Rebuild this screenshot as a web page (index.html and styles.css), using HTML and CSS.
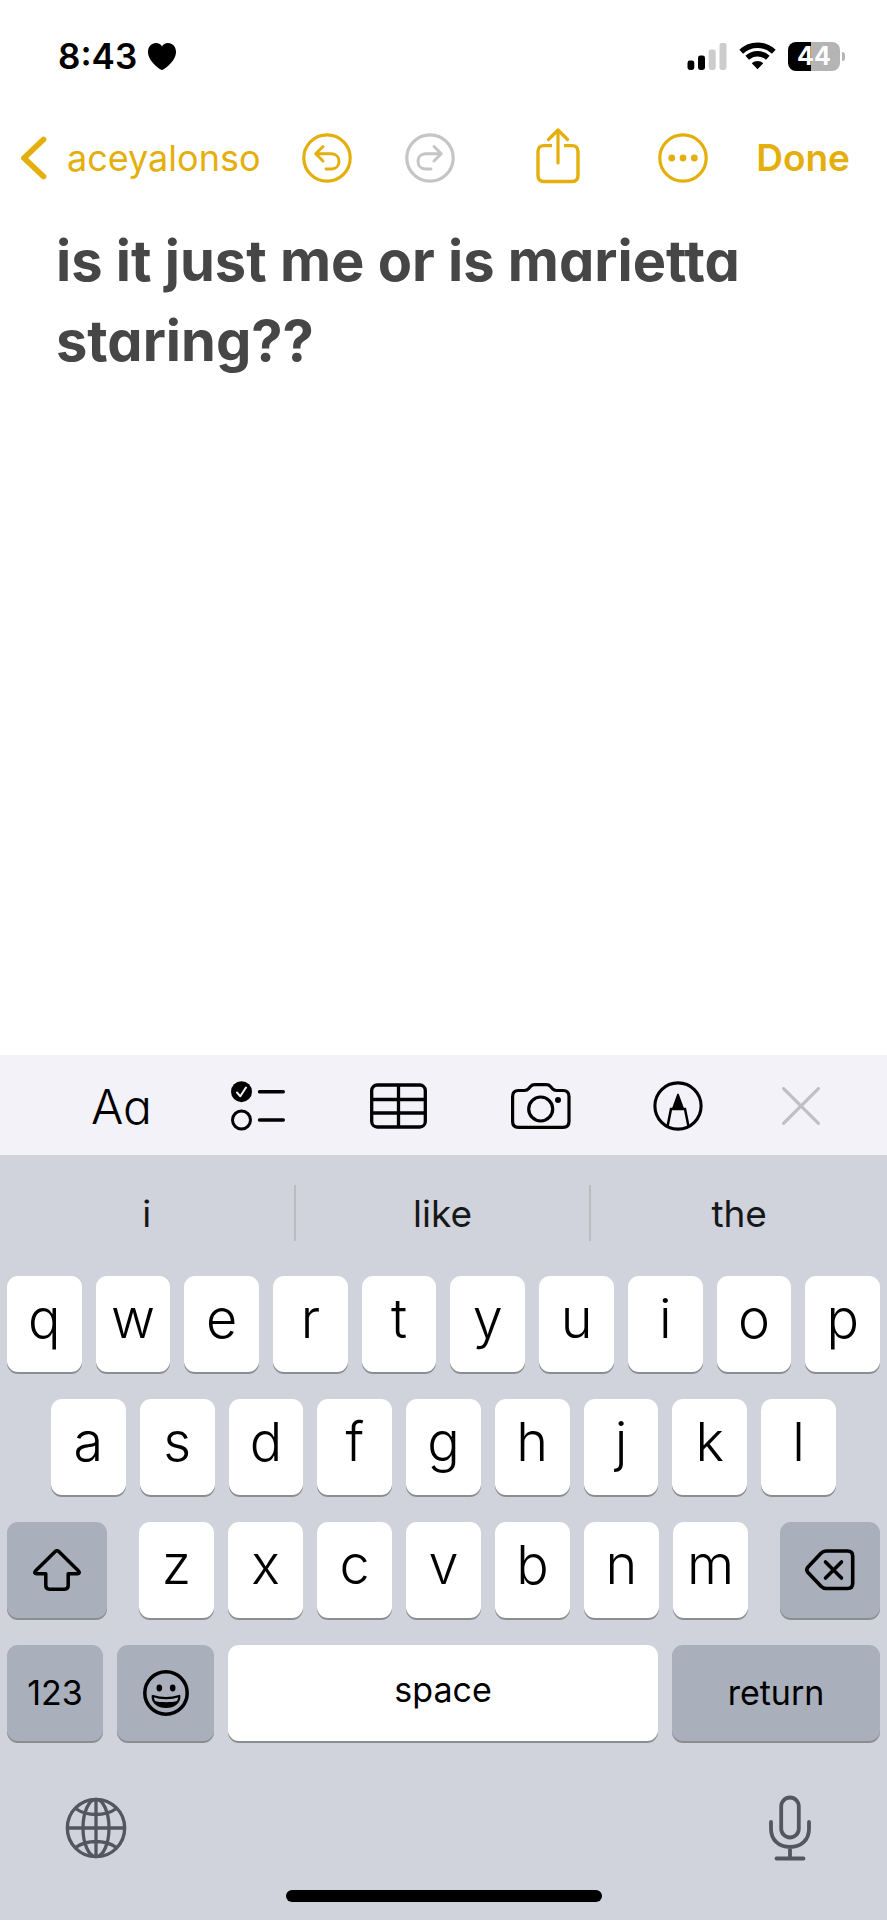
FILE: index.html
```html
<!DOCTYPE html>
<html lang="en">
<head>
<meta charset="utf-8">
<meta name="viewport" content="width=device-width, initial-scale=1">
<title>Notes</title>
<link rel="stylesheet" href="styles.css">
</head>
<body>
<div class="screen">
  <header class="status">
    <div class="status-left">
      <span class="time">8:43</span>
      <svg class="icon" width="28" height="27" viewBox="0 0 28 27" aria-hidden="true"><path fill="#000" d="M14 27C12.500 27 0 18.500 0 9C0 3.500 3.500 0 8 0C10.800 0 13 1.400 14 3.600C15 1.400 17.200 0 20 0C24.500 0 28 3.500 28 9C28 18.500 15.500 27 14 27Z"/></svg>
    </div>
    <div class="status-right">
      <svg class="icon" width="40" height="27" viewBox="0 0 40 27" aria-hidden="true"><g fill="#000"><rect x="0.500" y="17.500" width="6.800" height="9.500" rx="2.400"/><rect x="11" y="12.500" width="7" height="14.500" rx="2.400"/></g><g fill="#ccc"><rect x="21.700" y="6.500" width="7" height="20.500" rx="2.400"/><rect x="32.500" y="0" width="7" height="27" rx="2.400"/></g></svg>
      <svg class="icon" width="37" height="28" viewBox="0 0 37 28" aria-hidden="true"><path d="M2.200 9.800C11.400 1 25.600 1 34.800 9.800M8.200 15.800C14.200 10.300 22.800 10.300 28.800 15.800" fill="none" stroke="#000" stroke-width="5.400"/><path d="M12.800 21.200C16 18.400 21 18.400 24.200 21.200L18.500 27.200Z" fill="#000"/></svg>
      <div class="battery"><span class="battery-body">44</span><span class="battery-tip"></span></div>
    </div>
  </header>

  <nav class="nav">
    <button class="back" type="button">
      <svg class="icon" width="26" height="44" viewBox="0 0 26 44" aria-hidden="true"><path d="M22.500 3.500L3 22L22.500 40.500" fill="none" stroke="currentColor" stroke-width="5.800" stroke-linecap="round" stroke-linejoin="round"/></svg>
      aceyalonso
    </button>
    <button class="tool" type="button" aria-label="Undo">
      <svg class="icon" width="50" height="50" viewBox="0 0 50 50" fill="none" stroke="currentColor" stroke-linecap="round" stroke-linejoin="round"><circle cx="25" cy="25" r="23.200" stroke-width="3.200"/><path d="M21 13.500L13.700 20.800L21 28M14 20.800H29.500C34 20.800 37 24 37 28.300C37 32.800 34 36 29.500 36H24" stroke-width="2.900"/></svg>
    </button>
    <button class="tool redo" type="button" aria-label="Redo" disabled>
      <svg class="icon" width="50" height="50" viewBox="0 0 50 50" fill="none" stroke="currentColor" stroke-linecap="round" stroke-linejoin="round"><circle cx="25" cy="25" r="23.200" stroke-width="3.200"/><path d="M29 13.500L36.300 20.800L29 28M36 20.800H20.500C16 20.800 13 24 13 28.300C13 32.800 16 36 20.500 36H26" stroke-width="2.900"/></svg>
    </button>
    <button class="tool share" type="button" aria-label="Share">
      <svg class="icon" width="44" height="56" viewBox="0 0 44 56" fill="none" stroke="currentColor" stroke-linecap="round" stroke-linejoin="round" stroke-width="3.200"><path stroke-linecap="butt" stroke-width="3.400" d="M16 17.600H8C4 17.600 2 19.600 2 23.600V47.500C2 51.500 4 53.500 8 53.500H36C40 53.500 42 51.500 42 47.500V23.600C42 19.600 40 17.600 36 17.600H28"/><path d="M22 35V2.500M12.500 11.500L22 2L31.500 11.500"/></svg>
    </button>
    <button class="tool" type="button" aria-label="More">
      <svg class="icon" width="50" height="50" viewBox="0 0 50 50"><circle cx="25" cy="25" r="23.200" fill="none" stroke="currentColor" stroke-width="3.200"/><g fill="currentColor"><circle cx="13.700" cy="25" r="3.400"/><circle cx="25" cy="25" r="3.400"/><circle cx="36.300" cy="25" r="3.400"/></g></svg>
    </button>
    <button class="done" type="button">Done</button>
  </nav>

  <textarea class="note" aria-label="Note">is it just me or is marietta staring??</textarea>

  <div class="format-bar">
    <button class="tool text-style" type="button">Aa</button>
    <button class="tool" type="button" aria-label="Checklist">
      <svg class="icon" width="54" height="50" viewBox="0 0 54 50" fill="none" stroke="#000" stroke-linecap="round" stroke-linejoin="round"><circle cx="10.500" cy="10.700" r="10.500" fill="#000" stroke="none"/><path d="M6 11.500L9.300 15.300L15 6.500" stroke="#f3f2f8" stroke-width="2"/><circle cx="10.500" cy="39" r="9" stroke-width="3"/><path d="M28.500 10.700H52.300M28.500 39H52.300" stroke-width="3.400"/></svg>
    </button>
    <button class="tool" type="button" aria-label="Table">
      <svg class="icon" width="57" height="46" viewBox="0 0 57 46" fill="none" stroke="#000" stroke-width="3.300"><rect x="1.700" y="2" width="53.600" height="42" rx="5.500"/><path d="M28.500 2V44M2 16.500H55M2 30H55"/></svg>
    </button>
    <button class="tool" type="button" aria-label="Camera">
      <svg class="icon" width="60" height="46" viewBox="0 0 60 46" fill="none" stroke="#000" stroke-width="3.200" stroke-linejoin="round"><path d="M7.500 7.500H13.500C15.500 7.500 16.500 7 17.500 5.800L19.500 3.500C20.800 2 21.800 1.700 23.800 1.700H35.200C37.200 1.700 38.200 2 39.500 3.500L41.500 5.800C42.500 7 43.500 7.500 45.500 7.500H52C56 7.500 58 9.500 58 13.500V38.500C58 42.500 56 44.300 52 44.300H7.500C3.500 44.300 1.600 42.500 1.600 38.500V13.500C1.600 9.500 3.500 7.500 7.500 7.500Z"/><circle cx="29.700" cy="26" r="12"/><circle cx="47" cy="17" r="3" fill="#000" stroke="none"/></svg>
    </button>
    <button class="tool" type="button" aria-label="Markup">
      <svg class="icon" width="50" height="50" viewBox="0 0 50 50"><circle cx="25" cy="25" r="23.100" fill="none" stroke="#000" stroke-width="3.100"/><path d="M14.500 45.500L18 28H32L35.500 45.500" fill="none" stroke="#000" stroke-width="2.500"/><path d="M25 12.500C25.700 12.500 26 13.500 26.300 14.500L31.500 28.800H18.500L23.700 14.500C24 13.500 24.300 12.500 25 12.500Z" fill="#000"/></svg>
    </button>
    <button class="tool" type="button" aria-label="Close toolbar">
      <svg class="icon" width="38" height="38" viewBox="0 0 38 38"><path d="M1.600 1.600L36.400 36.400M36.400 1.600L1.600 36.400" fill="none" stroke="#c0bfc5" stroke-width="3.200" stroke-linecap="round"/></svg>
    </button>
  </div>

  <div class="keyboard">
    <div class="suggestions">
      <button class="suggestion" type="button">i</button>
      <button class="suggestion" type="button">like</button>
      <button class="suggestion" type="button">the</button>
    </div>
    <div class="rows">
      <div class="row row-top">
        <button class="key" type="button">q</button><button class="key" type="button">w</button><button class="key" type="button">e</button><button class="key" type="button">r</button><button class="key" type="button">t</button><button class="key" type="button">y</button><button class="key" type="button">u</button><button class="key" type="button">i</button><button class="key" type="button">o</button><button class="key" type="button">p</button>
      </div>
      <div class="row row-home">
        <button class="key" type="button">a</button><button class="key" type="button">s</button><button class="key" type="button">d</button><button class="key" type="button">f</button><button class="key" type="button">g</button><button class="key" type="button">h</button><button class="key" type="button">j</button><button class="key" type="button">k</button><button class="key" type="button">l</button>
      </div>
      <div class="row row-lower">
        <button class="key dark" type="button" aria-label="Shift">
          <svg class="icon" width="48" height="42" viewBox="0 0 48 42"><path d="M22.200 2.600C23.300 1.500 24.700 1.500 25.800 2.600L45.300 21.800C46.900 23.400 46.300 24.800 44.300 24.800H35.200V36.500C35.200 39 34 40.200 31.500 40.200H16.500C14 40.200 12.800 39 12.800 36.500V24.800H3.700C1.700 24.800 1.100 23.400 2.700 21.800Z" fill="none" stroke="#000" stroke-width="3.500" stroke-linejoin="round"/></svg>
        </button>
        <div class="row letters">
          <button class="key" type="button">z</button><button class="key" type="button">x</button><button class="key" type="button">c</button><button class="key" type="button">v</button><button class="key" type="button">b</button><button class="key" type="button">n</button><button class="key" type="button">m</button>
        </div>
        <button class="key dark" type="button" aria-label="Delete">
          <svg class="icon" width="50" height="42" viewBox="0 0 50 42" fill="none" stroke="#000" stroke-width="3.600" stroke-linecap="round" stroke-linejoin="round"><path d="M21 2H42.500C46 2 47.700 3.700 47.700 7.200V34.300C47.700 37.800 46 39.500 42.500 39.500H21C19 39.500 17.500 38.800 16 37.300L3 23.500C1.300 21.500 1.300 20 3 18L16 4.200C17.500 2.700 19 2 21 2Z"/><path d="M20.500 13L36.500 29M36.500 13L20.500 29"/></svg>
        </button>
      </div>
      <div class="row row-bottom">
        <button class="key dark word" type="button">123</button>
        <button class="key dark" type="button" aria-label="Emoji">
          <svg class="icon" width="46" height="46" viewBox="0 0 46 46"><circle cx="23" cy="23" r="21.200" fill="none" stroke="#000" stroke-width="3.500"/><ellipse cx="16.300" cy="18" rx="2.800" ry="3.400"/><ellipse cx="29.700" cy="18" rx="2.800" ry="3.400"/><path d="M9.700 26C18 28.700 28 28.700 36.300 26C36.500 32.500 31 37 23 37S9.500 32.500 9.700 26Z" fill="none" stroke="#000" stroke-width="2.200" stroke-linejoin="round"/><path d="M11 31C18 32.600 28 32.600 35 31C33 35 29 37 23 37S13 35 11 31Z"/></svg>
        </button>
        <button class="key word space" type="button">space</button>
        <button class="key dark word" type="button">return</button>
      </div>
    </div>
    <div class="dock">
      <button class="tool" type="button" aria-label="Next keyboard">
        <svg class="icon" width="62" height="62" viewBox="0 0 62 62" fill="none" stroke="currentColor" stroke-width="3.300"><circle cx="31" cy="31" r="28.700"/><ellipse cx="31" cy="31" rx="13" ry="28.700"/><path d="M31 2V60M2 31H60M10.500 11.500C22 19.500 40 19.500 51.500 11.500M10.500 50.500C22 42.500 40 42.500 51.500 50.500"/></svg>
      </button>
      <button class="tool" type="button" aria-label="Dictate">
        <svg class="icon" width="44" height="66" viewBox="0 0 44 66" fill="none" stroke="currentColor" stroke-width="3.800" stroke-linecap="round"><rect x="13.200" y="2.500" width="17.600" height="40" rx="8.800"/><path d="M3 27V34C3 45 11 52 22 52S41 45 41 34V27M22 52V63M8.500 63.500H35.500"/></svg>
      </button>
    </div>
    <div class="home-indicator"></div>
  </div>
</div>
</body>
</html>
```
FILE: styles.css
```css
* {
  box-sizing: border-box;
}

body {
  margin: 0;
  background: #fff;
  color: #000;
  font-family: Inter, "Liberation Sans", sans-serif;
}

button {
  margin: 0;
  padding: 0;
  border: 0;
  background: none;
  color: inherit;
  font: inherit;
}

.screen {
  display: flex;
  flex-direction: column;
  min-height: 100vh;
}

.icon {
  display: block;
  flex: none;
}

.tool {
  flex: none;
}

/* Status bar */
.status {
  display: flex;
  justify-content: space-between;
  align-items: center;
  height: 112px;
  padding: 0 42px 0 58px;
}

.status-left,
.status-right,
.battery {
  display: flex;
  align-items: center;
}

.status-left {
  gap: 11px;
  font-size: 35px;
  font-weight: 600;
}

.status-right {
  gap: 12px;
}

.battery {
  gap: 2px;
}

.battery-body {
  width: 52px;
  height: 29px;
  border-radius: 8px;
  background: linear-gradient(90deg, #000 44%, #b4b4b4 44%);
  color: #fff;
  font-size: 25px;
  font-weight: 700;
  line-height: 29px;
  text-align: center;
}

.battery-tip {
  width: 3px;
  height: 9px;
  border-radius: 0 4px 4px 0;
  background: #b4b4b4;
}

/* Navigation */
.nav {
  display: flex;
  align-items: center;
  height: 91px;
  padding: 0 37px 0 21px;
  color: #e4af0a;
  font-size: 37px;
}

.back {
  display: flex;
  align-items: center;
  gap: 20px;
  margin-right: 41px;
  font-size: 36px;
}

.redo {
  margin-left: 53px;
  color: #c5c5c7;
}

.share {
  margin-right: 78px;
  margin-left: auto;
  padding-bottom: 4px;
}

.done {
  margin-left: 48px;
  font-weight: 600;
}

/* Note */
.note {
  display: block;
  flex: 1;
  width: 100%;
  padding: 18px 56px;
  border: 0;
  outline: 0;
  background: none;
  color: #464646;
  font-family: inherit;
  font-feature-settings: "cv11";
  font-size: 56px;
  font-weight: 700;
  line-height: 80px;
  resize: none;
}

/* Formatting bar */
.format-bar {
  display: grid;
  grid-template-columns: 140fr 139fr 141fr 142fr 129fr 38fr;
  align-items: center;
  justify-items: start;
  height: 100px;
  padding: 2px 67px 0 91px;
  background: #f3f2f8;
}

.text-style {
  font-feature-settings: "cv11";
  font-size: 48px;
  font-weight: 300;
}

/* Keyboard */
.keyboard {
  background: #d0d3dc;
}

.suggestions {
  display: grid;
  grid-template-columns: repeat(3, 1fr);
  padding: 30px 0 35px;
}

.suggestion {
  height: 56px;
  color: #161719;
  font-size: 37px;
}

.suggestion:not(:last-child) {
  border-right: 2px solid #b9bcc1;
}

.rows {
  display: grid;
  gap: 27px;
  padding: 0 7px;
}

.row {
  display: grid;
  gap: 14px;
}

.row-top {
  grid-template-columns: repeat(10, 1fr);
}

.row-home {
  grid-template-columns: repeat(9, 1fr);
  padding: 0 44px;
}

.row-lower {
  grid-template-columns: 100px 1fr 100px;
  gap: 32px;
}

.letters {
  grid-template-columns: repeat(7, 1fr);
}

.row-bottom {
  grid-template-columns: 96px 97px 1fr 208px;
}

.key {
  display: flex;
  justify-content: center;
  align-items: center;
  height: 96px;
  padding-bottom: 12px;
  border-radius: 11px;
  background: #fff;
  box-shadow: 0 2px 0 #8b8d91;
  font-size: 54px;
  font-weight: 350;
}

.key.dark {
  padding-bottom: 0;
  background: #a9afbb;
}

.key.word {
  padding-bottom: 2px;
  font-size: 34px;
  font-weight: 400;
}

.key.space {
  padding-bottom: 8px;
}

.dock {
  display: flex;
  justify-content: space-between;
  align-items: center;
  padding: 54px 75px 29px 65px;
  color: #53565e;
}

.home-indicator {
  width: 316px;
  height: 12px;
  margin: 0 auto 18px;
  border-radius: 6px;
  background: #000;
}
```
